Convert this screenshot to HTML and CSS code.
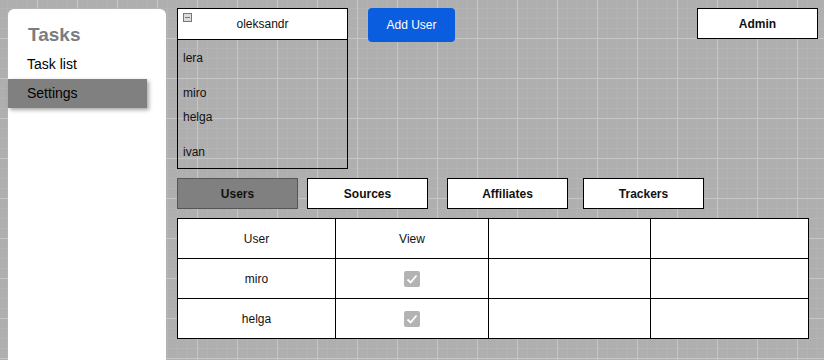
FILE: index.html
```html
<!DOCTYPE html>
<html lang="en">
<head>
    <meta charset="UTF-8">
    <meta name="viewport" content="width=device-width, initial-scale=1.0">
    <title>Tasks - Settings</title>
    <link rel="stylesheet" href="styles.css">
</head>
<body>

<div class="pagina">

    <!--menu lateral-->
    <div class="sidebar">
        <h2 class="sidebar-titulo">Tasks</h2>
        <div class="menu-item">Task list</div>
        <div class="menu-item activo">Settings</div>
    </div>

    <div class="contenido">

        <div class="fila-top">
            <div class="caja-usuarios">
                <div class="caja-cabecera">
                    <span class="icono-colapsar"></span>
                    oleksandr
                </div>
                <ul class="lista-nombres">
                    <li>lera</li>
                    <li class="separado">miro</li>
                    <li class="junto">helga</li>
                    <li class="separado">ivan</li>
                </ul>
            </div>

            <button class="btn-azul">Add User</button>
            <button class="btn-admin">Admin</button>
        </div>

        <!--pestañas-->
        <div class="pestanas">
            <button class="pestana activa">Users</button>
            <button class="pestana p-sources">Sources</button>
            <button class="pestana p-affiliates">Affiliates</button>
            <button class="pestana p-trackers">Trackers</button>
        </div>

        <table class="tabla-permisos">
            <colgroup>
                <col class="c1">
                <col class="c2">
                <col class="c3">
                <col class="c4">
            </colgroup>
            <tr>
                <td>User</td>
                <td>View</td>
                <td></td>
                <td></td>
            </tr>
            <tr>
                <td>miro</td>
                <td><span class="check"><svg width="14" height="14" viewBox="0 0 14 14"><path d="M2.5 7.5 L5.6 10.5 L11.5 3.5" fill="none" stroke="#fff" stroke-width="1.8"/></svg></span></td>
                <td></td>
                <td></td>
            </tr>
            <tr>
                <td>helga</td>
                <td><span class="check"><svg width="14" height="14" viewBox="0 0 14 14"><path d="M2.5 7.5 L5.6 10.5 L11.5 3.5" fill="none" stroke="#fff" stroke-width="1.8"/></svg></span></td>
                <td></td>
                <td></td>
            </tr>
        </table>

    </div>
</div>

</body>
</html>
```

FILE: styles.css
```css
body{
    margin: 0;
    font-family: "Liberation Sans", Arial, sans-serif;
    font-size: 12px;
    color: #111;
    height: 360px;
    overflow: hidden;
    background-color: #afafaf;
    background-image:
        linear-gradient(#c6c6c6 1px, transparent 1px),
        linear-gradient(90deg, #c6c6c6 1px, transparent 1px),
        linear-gradient(rgba(255,255,255,0.06) 1px, transparent 1px),
        linear-gradient(90deg, rgba(255,255,255,0.06) 1px, transparent 1px);
    background-size: 40px 40px, 40px 40px, 10px 10px, 10px 10px;
    background-position: 0 38px, 37px 0, 0 8px, 7px 0;
}

.pagina{
    display: flex;
    align-items: flex-start;
}

/* sidebar */
.sidebar{
    margin: 9px 0 0 8px;
    width: 158px;
    height: 360px;
    background: #fff;
    border-radius: 6px 6px 0 0;
    padding-top: 15px;
    box-sizing: border-box;
}
.sidebar-titulo{
    margin: 0 0 4px 20px;
    font-size: 19px;
    line-height: 22px;
    color: #7a7d80;
}
.menu-item{
    height: 29px;
    line-height: 29px;
    padding-left: 19px;
    font-size: 14px;
    color: #000;
    width: 139px;
    box-sizing: border-box;
}
.menu-item.activo{
    background: #808080;
    box-shadow: 2px 2px 4px rgba(0,0,0,0.35);
}

/* contenido */
.contenido{
    margin: 8px 0 0 11px;
    flex: 1;
    padding-right: 6px;
}
.fila-top{
    display: flex;
    align-items: flex-start;
}

.caja-usuarios{
    width: 171px;
    height: 161px;
    border: 1px solid #000;
    box-sizing: border-box;
}
.caja-cabecera{
    position: relative;
    height: 31px;
    line-height: 30px;
    background: #fff;
    border-bottom: 1px solid #000;
    box-sizing: border-box;
    text-align: center;
}
.icono-colapsar{
    position: absolute;
    left: 5px;
    top: 4px;
    width: 7px;
    height: 7px;
    border: 1px solid #777;
    background: linear-gradient(#777, #777) center / 5px 1px no-repeat, #ddd;
}
.lista-nombres{
    list-style-type: none;
    margin: 0;
    padding: 8px 0 0 5px;
}
.lista-nombres li{
    line-height: 20px;
}
.lista-nombres .separado{
    margin-top: 15px;
}
.lista-nombres .junto{
    margin-top: 4px;
}

.btn-azul{
    margin-left: 20px;
    width: 87px;
    height: 34px;
    border: none;
    border-radius: 4px;
    background: #0b5ddf;
    color: #fff;
    font-family: inherit;
    font-size: 12px;
}
.btn-admin{
    margin-left: auto;
    width: 121px;
    height: 31px;
    border: 1px solid #000;
    background: #fff;
    font-family: inherit;
    font-size: 12px;
    font-weight: bold;
    color: #111;
}

/* pestañas */
.pestanas{
    display: flex;
    margin-top: 9px;
}
.pestana{
    width: 121px;
    height: 31px;
    border: 1px solid #000;
    background: #fff;
    font-family: inherit;
    font-size: 12px;
    font-weight: bold;
    color: #111;
}
.pestana.activa{
    background: #808080;
    border-color: #555;
}
.p-sources{ margin-left: 9px; }
.p-affiliates{ margin-left: 19px; }
.p-trackers{ margin-left: 15px; }

/* tabla */
.tabla-permisos{
    margin-top: 9px;
    width: 631px;
    border-collapse: collapse;
    table-layout: fixed;
    background: #fff;
}
.tabla-permisos td{
    border: 1px solid #000;
    height: 39px;
    padding: 0;
    text-align: center;
    vertical-align: middle;
}
.c1{ width: 158px; }
.c2{ width: 153px; }
.c3{ width: 162px; }
.c4{ width: 158px; }

.check{
    display: inline-flex;
    align-items: center;
    justify-content: center;
    width: 16px;
    height: 16px;
    border-radius: 2px;
    background: #b3b3b3;
    vertical-align: middle;
}
```
